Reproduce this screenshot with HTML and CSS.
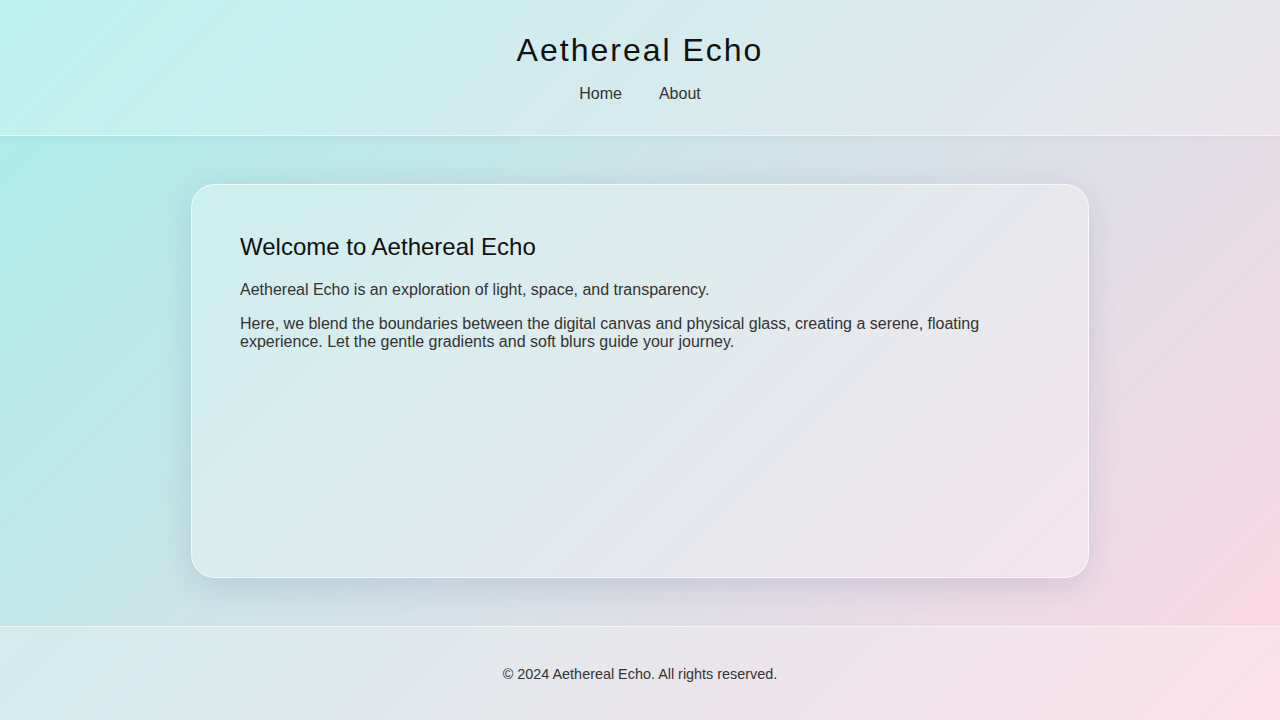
FILE: index.html
```html
<!doctype html>
<html>
<head>
<meta charset="utf-8">
<title>Aethereal Echo</title>
<link rel="stylesheet" href="styles.css">
</head>

<body>
	<header class="site-head">
		<h1 class="logo">Aethereal Echo</h1>
		<nav class="nav">
			<a href="javascript:;">Home</a>
			<a href="javascript:;">About</a>
		</nav>
	</header>
	<main class="content">
		<section class="glass">
			<h2>Welcome to Aethereal Echo</h2>
			<p>Aethereal Echo is an exploration of light, space, and transparency.</p>
			<p>Here, we blend the boundaries between the digital canvas and physical glass, creating a serene, floating experience. Let the gentle gradients and soft blurs guide your journey.</p>
		</section>
	</main>
	<footer class="site-foot">
		<p>&copy; 2024 Aethereal Echo. All rights reserved.</p>
	</footer>
</body>
</html>
```

FILE: styles.css
```css
html{ height:100%;}
body{ margin:0; min-height:100vh; display:flex; flex-direction:column; font-family:"Liberation Sans", Arial, sans-serif; color:#333; background:linear-gradient(135deg, #a8edea 0%, #fed6e3 100%); background-attachment:fixed;}
.site-head{ padding:32px 0; text-align:center; background:rgba(255,255,255,0.25); border-bottom:1px solid rgba(255,255,255,0.55); box-shadow:0 2px 8px rgba(31,38,135,0.04);}
.logo{ margin:0 0 16px; font-size:32px; font-weight:400; letter-spacing:2px; color:#111; line-height:37px;}
.nav{ display:flex; justify-content:center; gap:37px; line-height:18px;}
.nav a{ color:#333; text-decoration:none; font-size:16px;}
.content{ flex:1; padding:48px 0; display:flex; justify-content:center; align-items:flex-start;}
.glass{ box-sizing:border-box; width:898px; min-height:394px; padding:48px; border-radius:24px; background:rgba(255,255,255,0.3); border:1px solid rgba(255,255,255,0.65); box-shadow:0 8px 32px rgba(31,38,135,0.12);}
.glass h2{ margin:0 0 20px; font-size:24px; font-weight:400; line-height:28px; color:#111;}
.glass p{ margin:0 0 16px; font-size:16px; line-height:18px; color:#333;}
.site-foot{ padding:39px 0 38px; text-align:center; background:rgba(255,255,255,0.25); border-top:1px solid rgba(255,255,255,0.55);}
.site-foot p{ margin:0; font-size:14.4px; line-height:16px; color:#333;}
```
